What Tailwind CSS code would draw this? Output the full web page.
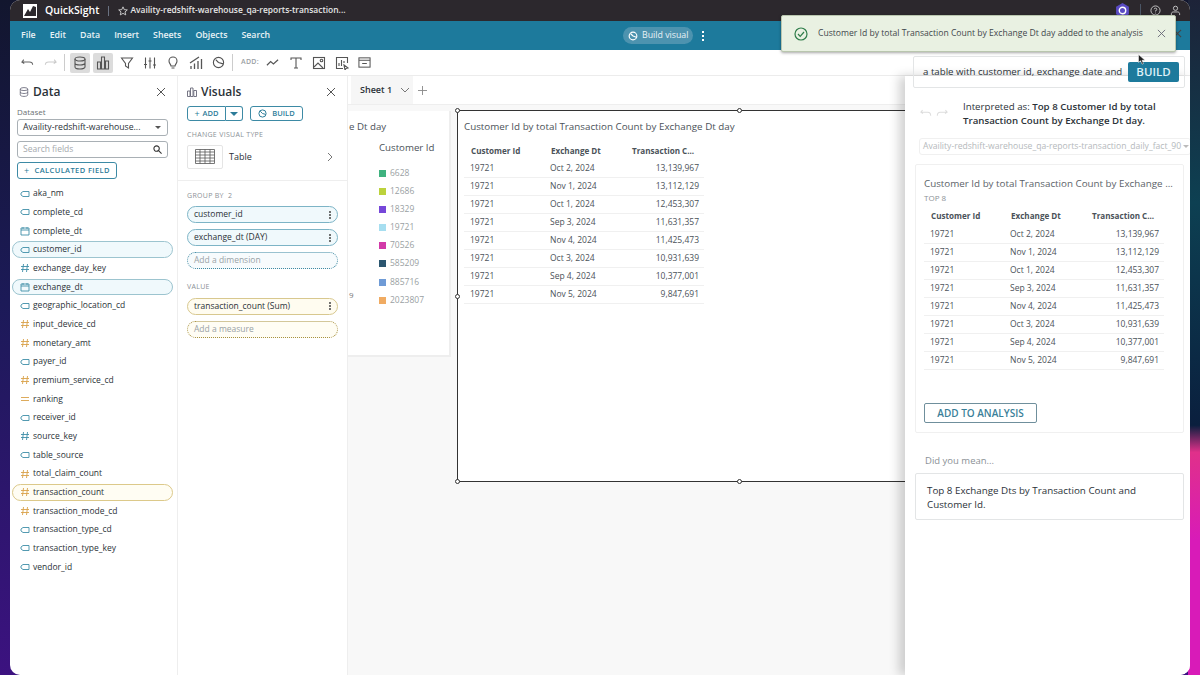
<!DOCTYPE html>
<html lang="en">

<head>
    <meta charset="UTF-8">
    <title>QuickSight</title>
    <script src="https://cdn.jsdelivr.net/npm/@tailwindcss/browser@4"></script>
</head>

<body class="h-[675px] w-[1200px] overflow-hidden font-['Open_Sans','Noto_Sans',sans-serif] text-[#2b3238]">
    <div class="relative h-[675px] w-[1200px] overflow-hidden bg-[linear-gradient(180deg,#12162e_0%,#1c1a58_45%,#3c1280_100%)]">
        <!-- wallpaper on the right -->
        <div class="absolute right-0 top-0 h-full w-[12px] bg-[linear-gradient(180deg,#1d2338_0%,#0d4052_30%,#0a1f3e_63%,#e0308a_67%,#d81bb8_80%,#d81bb8_100%)]"></div>

        <div class="relative ml-[10px] flex h-[675px] w-[1180px] flex-col overflow-hidden rounded-[10px] bg-white">
            <!-- title bar -->
            <header class="flex h-[21px] shrink-0 items-center bg-[#2c282d] pl-[13px] pr-[9px] text-white">
                <svg class="h-[14px] w-[14px]" viewBox="0 0 14 14"><rect width="14" height="14" fill="#fff" /><path d="M1 12 5 5l2 3 3-6 3 1v9z" fill="#2c282d" /></svg>
                <span class="ml-[8px] text-[10.500px] font-semibold">QuickSight</span>
                <span class="ml-[9px] h-[10px] w-px bg-gray-500"></span>
                <svg class="ml-[9px] h-[10px] w-[10px]" viewBox="0 0 12 12" fill="none" stroke="#ddd"><path d="m6 1 1.500 3.400 3.700.3-2.800 2.400.9 3.600L6 8.800l-3.300 1.900.9-3.600L.8 4.700l3.700-.3z" /></svg>
                <span class="ml-[2px] text-[8.450px] font-semibold text-[#e6e6e6]">Availity-redshift-warehouse_qa-reports-transaction...</span>
                <div class="ml-auto flex items-center gap-[9px]">
                    <svg class="mr-[1px] h-[15px] w-[15px]" viewBox="0 0 14 14"><path d="M7 0l6 3.500v7L7 14l-6-3.500v-7z" fill="#5a4bc4" /><circle cx="7" cy="7" r="3" fill="none" stroke="#fff" stroke-width="1.300" /></svg>
                    <span class="h-[14px] w-px bg-gray-600"></span>
                    <svg class="h-[11px] w-[11px]" viewBox="0 0 12 12" fill="none" stroke="#ccc"><circle cx="6" cy="6" r="5" /><path d="M4.600 4.600A1.400 1.400 0 1 1 6 6.200v.8M6 8.400v.8" /></svg>
                    <svg class="h-[11px] w-[11px]" viewBox="0 0 12 12" fill="none" stroke="#ccc"><circle cx="6" cy="3.600" r="2.300" /><path d="M1.500 11V9.600c0-1.200 1-2 2-2h5c1 0 2 .8 2 2V11" /></svg>
                </div>
            </header>

            <!-- menu bar -->
            <nav class="flex h-[29px] shrink-0 items-center bg-[#1d7a9c] pl-[11px] text-[8.800px] font-semibold text-[#e8f2f6]">
                <span>File</span><span class="ml-[14px]">Edit</span><span class="ml-[14px]">Data</span><span class="ml-[14px]">Insert</span><span class="ml-[14px]">Sheets</span><span class="ml-[14px]">Objects</span><span class="ml-[14px]">Search</span>
                <span class="ml-[353px] flex h-[17px] w-[70px] items-center justify-center gap-[4px] rounded-full bg-[#4d93af] font-normal">
                    <svg class="h-[10px] w-[10px]" viewBox="0 0 12 12" fill="none" stroke="#fff" stroke-width="1.400"><circle cx="6" cy="6" r="4.600" /><path d="M6 6l4 1.500M6 6 3 3" /></svg>
                    Build visual
                </span>
                <span class="ml-[9px] flex flex-col gap-[2px]"><i class="h-[2px] w-[2px] bg-white"></i><i class="h-[2px] w-[2px] bg-white"></i><i class="h-[2px] w-[2px] bg-white"></i></span>
            </nav>

            <!-- toolbar -->
            <div class="flex h-[26px] shrink-0 items-center border-b border-[#ececec] pl-[11px] text-[#5f6b73]">
                <svg class="h-[13px] w-[13px]" viewBox="0 0 14 14" fill="none" stroke="#666" stroke-width="1.200"><path d="M3 4 1 6.500 3.500 8M1 6.500h8c2 0 3.500 1 3.500 3" /></svg>
                <svg class="ml-[10px] h-[13px] w-[13px]" viewBox="0 0 14 14" fill="none" stroke="#ccc" stroke-width="1.200"><path d="M11 4l2 2.500L10.500 8M13 6.500H5c-2 0-3.500 1-3.500 3" /></svg>
                <span class="ml-[7px] h-[17px] w-px bg-[#ccc]"></span>
                <span class="ml-[5px] flex h-[20px] w-[20px] items-center justify-center rounded-[2px] bg-[#dcdcdc]"><svg class="h-[14px] w-[14px]" viewBox="0 0 14 14" fill="none" stroke="#555" stroke-width="1.100"><ellipse cx="7" cy="3" rx="5" ry="2" /><path d="M2 3v8c0 1 2 2 5 2s5-1 5-2V3M2 7c0 1 2 2 5 2s5-1 5-2" /></svg></span>
                <span class="ml-[3px] flex h-[20px] w-[20px] items-center justify-center rounded-[2px] bg-[#dcdcdc]"><svg class="h-[14px] w-[14px]" viewBox="0 0 14 14" fill="none" stroke="#555" stroke-width="1.100"><path d="M1.500 6h3v7h-3zM5.500 1h3v12h-3zM9.500 5h3v8h-3z" /></svg></span>
                <svg class="ml-[7px] h-[14px] w-[14px]" viewBox="0 0 14 14" fill="none" stroke="#555" stroke-width="1.100"><path d="M1.500 2h11L8.500 7.500V12l-3-2V7.500z" /></svg>
                <svg class="ml-[9px] h-[14px] w-[14px]" viewBox="0 0 14 14" fill="none" stroke="#555" stroke-width="1.100"><path d="M2.500 1.500v11M7 1.500v11M11.500 1.500v11M1 8.500h3M5.500 5h3M10 9h3" /></svg>
                <svg class="ml-[9px] h-[14px] w-[14px]" viewBox="0 0 14 14" fill="none" stroke="#555" stroke-width="1.100"><path d="M5 10c0-1.500-2-2.500-2-5a4 4 0 0 1 8 0c0 2.500-2 3.500-2 5zM5.500 12h3" /></svg>
                <svg class="ml-[9px] h-[14px] w-[14px]" viewBox="0 0 14 14" fill="none" stroke="#555" stroke-width="1.300"><path d="M2 13v-3M5.500 13V7.500M9 13V5M12.500 13V3M1 7l9-6" /></svg>
                <svg class="ml-[9px] h-[13px] w-[13px]" viewBox="0 0 14 14" fill="none" stroke="#555" stroke-width="1.200"><circle cx="7" cy="7" r="5.500" /><path d="M7 7l5 1.500M7 7 4 4" /></svg>
                <span class="ml-[7px] h-[17px] w-px bg-[#ccc]"></span>
                <span class="ml-[8px] text-[7px] font-semibold tracking-[0.3px] text-[#9aa0a4]">ADD:</span>
                <svg class="ml-[7px] h-[13px] w-[13px]" viewBox="0 0 14 14" fill="none" stroke="#555" stroke-width="1.300"><path d="m1 10 4-4 3 2.500L13 4" /></svg>
                <svg class="ml-[10px] h-[14px] w-[14px]" viewBox="0 0 14 14" fill="none" stroke="#555" stroke-width="1.100"><path d="M2 4V2h10v2M7 2v10M5 12h4" /></svg>
                <svg class="ml-[9px] h-[14px] w-[14px]" viewBox="0 0 14 14" fill="none" stroke="#555" stroke-width="1.100"><rect x="1.500" y="1.500" width="11" height="11" /><circle cx="9.500" cy="4.500" r="1.300" /><path d="m2 11 4-4 5 5" /></svg>
                <svg class="ml-[9px] h-[14px] w-[14px]" viewBox="0 0 14 14" fill="none" stroke="#555" stroke-width="1.100"><path d="M8 12.500H1.500v-11h11V7M4 10V7M6.500 10V4M9 7V5M9 9l4 3-2 .5-1 1.500z" /></svg>
                <svg class="ml-[9px] h-[13px] w-[13px]" viewBox="0 0 14 14" fill="none" stroke="#555" stroke-width="1.100"><rect x="1" y="2" width="12" height="10" /><path d="M1 4.500h12M4.500 8h5" /></svg>
            </div>

            <div class="flex min-h-0 flex-1">
                <!-- data panel -->
                <aside class="w-[168px] shrink-0 border-r border-[#eeeeee] pl-[7px] pr-[9px]">
                    <div class="flex h-[32px] items-center pl-[2px]">
                        <svg class="h-[10px] w-[10px]" viewBox="0 0 12 12" fill="none" stroke="#667" stroke-width="1"><ellipse cx="6" cy="2.500" rx="4.500" ry="1.800" /><path d="M1.500 2.500v7c0 1 2 1.800 4.500 1.800s4.500-.8 4.500-1.800v-7M1.500 6c0 1 2 1.800 4.500 1.800S10.500 7 10.500 6" /></svg>
                        <span class="ml-[4px] text-[12px] font-semibold">Data</span>
                        <svg class="ml-auto mr-[2px] h-[10px] w-[10px]" viewBox="0 0 10 10" fill="none" stroke="#555"><path d="m1 1 8 8M9 1 1 9" /></svg>
                    </div>
                    <p class="-mt-[2px] text-[8px] text-[#6b7075]">Dataset</p>
                    <div class="mt-[1px] flex h-[17px] items-center justify-between rounded-[3px] border border-[#a9b0b5] pl-[5px] pr-[6px] text-[8.700px]">Availity-redshift-warehouse... <i class="h-0 w-0 border-x-[3px] border-t-[3px] border-x-transparent border-t-[#555]"></i></div>
                    <div class="mt-[5px] flex h-[17px] items-center justify-between rounded-[3px] border border-[#a9b0b5] pl-[5px] pr-[5px] text-[8.500px] text-[#a5a9ad]">Search fields
                        <svg class="h-[9px] w-[9px]" viewBox="0 0 10 10" fill="none" stroke="#333" stroke-width="1.200"><circle cx="4" cy="4" r="3" /><path d="m6.500 6.500 3 3" /></svg>
                    </div>
                    <div class="mt-[4px] flex h-[17px] w-[100px] items-center justify-center gap-[5px] rounded-[3px] border border-[#3d8aa5] text-[7.500px] font-semibold tracking-[0.4px] text-[#2c7c99]"><span class="text-[9px] font-normal">+</span>CALCULATED FIELD</div>

                    <ul id="fields" class="mt-[5.500px] text-[8.500px]">
                        <li class="flex h-[18.670px] items-center pl-[3px]"><svg class="mr-[3px] h-[10px] w-[10px]" viewBox="0 0 10 10" fill="none" stroke="#3f8fa8" stroke-width=".9"><path d="M3 2.500h6v5H3L1 6V4z" /></svg>aka_nm</li>
                        <li class="flex h-[18.670px] items-center pl-[3px]"><svg class="mr-[3px] h-[10px] w-[10px]" viewBox="0 0 10 10" fill="none" stroke="#3f8fa8" stroke-width=".9"><path d="M3 2.500h6v5H3L1 6V4z" /></svg>complete_cd</li>
                        <li class="flex h-[18.670px] items-center pl-[3px]"><svg class="mr-[3px] h-[10px] w-[10px]" viewBox="0 0 10 10" fill="none" stroke="#3f8fa8" stroke-width=".9"><path d="M1 2h8v7H1zM1 4h8M3 1v2M7 1v2" /></svg>complete_dt</li>
                        <li class="-mx-[5px] my-[1px] flex h-[16.670px] items-center rounded-full border border-[#9cc4cf] bg-[#f0f9fc] pl-[7px]"><svg class="mr-[3px] h-[10px] w-[10px]" viewBox="0 0 10 10" fill="none" stroke="#3f8fa8" stroke-width=".9"><path d="M3 2.500h6v5H3L1 6V4z" /></svg>customer_id</li>
                        <li class="flex h-[18.670px] items-center pl-[3px]"><svg class="mr-[3px] h-[10px] w-[10px]" viewBox="0 0 10 10" fill="none" stroke="#3f8fa8" stroke-width=".9"><path d="M3.500 1 2.500 9M7.500 1l-1 8M1 3.500h8M1 6.500h8" /></svg>exchange_day_key</li>
                        <li class="-mx-[5px] my-[1px] flex h-[16.670px] items-center rounded-full border border-[#9cc4cf] bg-[#f0f9fc] pl-[7px]"><svg class="mr-[3px] h-[10px] w-[10px]" viewBox="0 0 10 10" fill="none" stroke="#3f8fa8" stroke-width=".9"><path d="M1 2h8v7H1zM1 4h8M3 1v2M7 1v2" /></svg>exchange_dt</li>
                        <li class="flex h-[18.670px] items-center pl-[3px]"><svg class="mr-[3px] h-[10px] w-[10px]" viewBox="0 0 10 10" fill="none" stroke="#3f8fa8" stroke-width=".9"><path d="M3 2.500h6v5H3L1 6V4z" /></svg>geographic_location_cd</li>
                        <li class="flex h-[18.670px] items-center pl-[3px]"><svg class="mr-[3px] h-[10px] w-[10px]" viewBox="0 0 10 10" fill="none" stroke="#d9a24a" stroke-width=".9"><path d="M3.500 1 2.500 9M7.500 1l-1 8M1 3.500h8M1 6.500h8" /></svg>input_device_cd</li>
                        <li class="flex h-[18.670px] items-center pl-[3px]"><svg class="mr-[3px] h-[10px] w-[10px]" viewBox="0 0 10 10" fill="none" stroke="#d9a24a" stroke-width=".9"><path d="M3.500 1 2.500 9M7.500 1l-1 8M1 3.500h8M1 6.500h8" /></svg>monetary_amt</li>
                        <li class="flex h-[18.670px] items-center pl-[3px]"><svg class="mr-[3px] h-[10px] w-[10px]" viewBox="0 0 10 10" fill="none" stroke="#3f8fa8" stroke-width=".9"><path d="M3 2.500h6v5H3L1 6V4z" /></svg>payer_id</li>
                        <li class="flex h-[18.670px] items-center pl-[3px]"><svg class="mr-[3px] h-[10px] w-[10px]" viewBox="0 0 10 10" fill="none" stroke="#d9a24a" stroke-width=".9"><path d="M3.500 1 2.500 9M7.500 1l-1 8M1 3.500h8M1 6.500h8" /></svg>premium_service_cd</li>
                        <li class="flex h-[18.670px] items-center pl-[3px]"><svg class="mr-[3px] h-[10px] w-[10px]" viewBox="0 0 10 10" fill="none" stroke="#d9a24a" stroke-width=".9"><path d="M1 3.500h8M1 6.500h8" /></svg>ranking</li>
                        <li class="flex h-[18.670px] items-center pl-[3px]"><svg class="mr-[3px] h-[10px] w-[10px]" viewBox="0 0 10 10" fill="none" stroke="#3f8fa8" stroke-width=".9"><path d="M3 2.500h6v5H3L1 6V4z" /></svg>receiver_id</li>
                        <li class="flex h-[18.670px] items-center pl-[3px]"><svg class="mr-[3px] h-[10px] w-[10px]" viewBox="0 0 10 10" fill="none" stroke="#3f8fa8" stroke-width=".9"><path d="M3.500 1 2.500 9M7.500 1l-1 8M1 3.500h8M1 6.500h8" /></svg>source_key</li>
                        <li class="flex h-[18.670px] items-center pl-[3px]"><svg class="mr-[3px] h-[10px] w-[10px]" viewBox="0 0 10 10" fill="none" stroke="#3f8fa8" stroke-width=".9"><path d="M3 2.500h6v5H3L1 6V4z" /></svg>table_source</li>
                        <li class="flex h-[18.670px] items-center pl-[3px]"><svg class="mr-[3px] h-[10px] w-[10px]" viewBox="0 0 10 10" fill="none" stroke="#d9a24a" stroke-width=".9"><path d="M3.500 1 2.500 9M7.500 1l-1 8M1 3.500h8M1 6.500h8" /></svg>total_claim_count</li>
                        <li class="-mx-[5px] my-[1px] flex h-[16.670px] items-center rounded-full border border-[#dcc98a] bg-[#fffdf3] pl-[7px]"><svg class="mr-[3px] h-[10px] w-[10px]" viewBox="0 0 10 10" fill="none" stroke="#d9a24a" stroke-width=".9"><path d="M3.500 1 2.500 9M7.500 1l-1 8M1 3.500h8M1 6.500h8" /></svg>transaction_count</li>
                        <li class="flex h-[18.670px] items-center pl-[3px]"><svg class="mr-[3px] h-[10px] w-[10px]" viewBox="0 0 10 10" fill="none" stroke="#d9a24a" stroke-width=".9"><path d="M3.500 1 2.500 9M7.500 1l-1 8M1 3.500h8M1 6.500h8" /></svg>transaction_mode_cd</li>
                        <li class="flex h-[18.670px] items-center pl-[3px]"><svg class="mr-[3px] h-[10px] w-[10px]" viewBox="0 0 10 10" fill="none" stroke="#3f8fa8" stroke-width=".9"><path d="M3 2.500h6v5H3L1 6V4z" /></svg>transaction_type_cd</li>
                        <li class="flex h-[18.670px] items-center pl-[3px]"><svg class="mr-[3px] h-[10px] w-[10px]" viewBox="0 0 10 10" fill="none" stroke="#3f8fa8" stroke-width=".9"><path d="M3 2.500h6v5H3L1 6V4z" /></svg>transaction_type_key</li>
                        <li class="flex h-[18.670px] items-center pl-[3px]"><svg class="mr-[3px] h-[10px] w-[10px]" viewBox="0 0 10 10" fill="none" stroke="#3f8fa8" stroke-width=".9"><path d="M3 2.500h6v5H3L1 6V4z" /></svg>vendor_id</li>
                    </ul>
                </aside>

                <!-- visuals panel -->
                <aside class="w-[170px] shrink-0 border-r border-[#eeeeee]">
                    <div class="border-b border-[#eeeeee] px-[9px] pb-[11px]">
                        <div class="flex h-[32px] items-center">
                            <svg class="h-[10px] w-[10px]" viewBox="0 0 10 10" fill="none" stroke="#667" stroke-width=".9"><path d="M.5 4h2.500v5.500H.5zM3.500 1H6v8.500H3.500zM6.800 3.500h2.700v6H6.800z" /></svg>
                            <span class="ml-[4px] text-[12px] font-semibold">Visuals</span>
                            <svg class="ml-auto mr-[2px] h-[10px] w-[10px]" viewBox="0 0 10 10" fill="none" stroke="#555"><path d="m1 1 8 8M9 1 1 9" /></svg>
                        </div>
                        <div class="-mt-[2px] flex items-center">
                            <div class="flex h-[15px] w-[39px] items-center justify-center gap-[3px] rounded-l-[3px] border border-[#3d8aa5] text-[7.500px] font-semibold text-[#2c7c99]"><span class="text-[9px] font-normal">+</span>ADD</div>
                            <div class="flex h-[15px] w-[17px] items-center justify-center rounded-r-[3px] border border-l-0 border-[#3d8aa5]"><i class="h-0 w-0 border-x-[4px] border-t-[4px] border-x-transparent border-t-[#2c7c99]"></i></div>
                            <div class="ml-[7px] flex h-[15px] w-[53px] items-center justify-center gap-[5px] rounded-[3px] border border-[#3d8aa5] text-[7.500px] font-semibold text-[#2c7c99]"><svg class="h-[9px] w-[9px]" viewBox="0 0 10 10" fill="none" stroke="#2c7c99" stroke-width="1.100"><circle cx="5" cy="5" r="4" /><path d="m5 5 3.500 1M5 5 2.500 2.500" /></svg>BUILD</div>
                        </div>
                        <p class="mt-[9px] text-[7px] tracking-[0.3px] text-[#8b9196]">CHANGE VISUAL TYPE</p>
                        <div class="mt-[4px] flex items-center">
                            <div class="flex h-[24px] w-[36px] items-center justify-center rounded-[2px] border border-[#e5e5e5]"><svg class="h-[15px] w-[20px]" viewBox="0 0 20 15" fill="none" stroke="#555" stroke-width=".8"><path d="M.5.500h19v14H.5zM.5 3h19M.5 6h19M.5 9h19M.5 12h19M5 .5v14M10 .5v14M15 .5v14" /></svg></div>
                            <span class="ml-[6px] text-[9px]">Table</span>
                            <svg class="ml-auto mr-[5px] h-[10px] w-[6px]" viewBox="0 0 6 10" fill="none" stroke="#777"><path d="m1 1 4 4-4 4" /></svg>
                        </div>
                    </div>
                    <div class="px-[9px]">
                        <p class="mt-[10px] text-[7px] tracking-[0.3px] text-[#8b9196]">GROUP BY &nbsp;2</p>
                        <div class="mt-[5px] flex h-[17px] items-center justify-between rounded-full border border-[#7db4c6] bg-[#f0f9fc] pl-[6px] pr-[6px] text-[8.500px]">customer_id<span class="flex flex-col gap-[1px]"><i class="h-[2px] w-[2px] rounded-full bg-[#444]"></i><i class="h-[2px] w-[2px] rounded-full bg-[#444]"></i><i class="h-[2px] w-[2px] rounded-full bg-[#444]"></i></span></div>
                        <div class="mt-[6px] flex h-[17px] items-center justify-between rounded-full border border-[#7db4c6] bg-[#f0f9fc] pl-[6px] pr-[6px] text-[8.500px]">exchange_dt (DAY)<span class="flex flex-col gap-[1px]"><i class="h-[2px] w-[2px] rounded-full bg-[#444]"></i><i class="h-[2px] w-[2px] rounded-full bg-[#444]"></i><i class="h-[2px] w-[2px] rounded-full bg-[#444]"></i></span></div>
                        <div class="mt-[6px] flex h-[17px] items-center rounded-full border-[1.500px] border-dotted border-[#3f8aa3] bg-[#f7fbfd] pl-[6px] text-[8.500px] text-[#9aa2a6]">Add a dimension</div>
                        <p class="mt-[13px] text-[7px] tracking-[0.3px] text-[#8b9196]">VALUE</p>
                        <div class="mt-[5px] flex h-[17px] items-center justify-between rounded-full border border-[#d8c88f] bg-[#fffcf0] pl-[6px] pr-[6px] text-[8.500px]">transaction_count (Sum)<span class="flex flex-col gap-[1px]"><i class="h-[2px] w-[2px] rounded-full bg-[#444]"></i><i class="h-[2px] w-[2px] rounded-full bg-[#444]"></i><i class="h-[2px] w-[2px] rounded-full bg-[#444]"></i></span></div>
                        <div class="mt-[6px] flex h-[17px] items-center rounded-full border-[1.500px] border-dotted border-[#a89240] bg-[#fffdf4] pl-[6px] text-[8.500px] text-[#9aa2a6]">Add a measure</div>
                    </div>
                </aside>

                <!-- canvas -->
                <main class="relative min-w-0 flex-1 bg-[#f8f8f8]">
                    <div class="flex h-[29px] border-b border-[#eeeeee] bg-white">
                        <div class="ml-[3px] flex w-[62px] items-center justify-between bg-[#f6f6f6] pl-[9px] pr-[3px] text-[9px] font-semibold">Sheet 1
                            <svg class="h-[6px] w-[10px]" viewBox="0 0 10 6" fill="none" stroke="#777"><path d="m1 1 4 4 4-4" /></svg>
                        </div>
                        <svg class="ml-[5px] mt-[10px] h-[9px] w-[9px]" viewBox="0 0 10 10" fill="none" stroke="#888"><path d="M5 0v10M0 5h10" /></svg>
                    </div>
                    <div class="flex items-start pt-[6px]">
                        <!-- chart behind, cut off on the left -->
                        <div class="relative h-[246px] w-[103px] shrink-0 border-b-2 border-r-2 border-[#eeeeee] bg-white">
                            <p class="pl-[1px] pt-[9px] text-[9.700px] text-[#4b5259]">e Dt day</p>
                            <p class="ml-[31px] mt-[6px] text-[9.700px] text-[#4b5259]">Customer Id</p>
                            <ul class="ml-[31px] mt-[9px] text-[8.500px] text-[#9a9fa3]">
                                <li class="flex h-[18.150px] items-center gap-[4px]"><i class="h-[7px] w-[7px] bg-[#3fb27f]"></i>6628</li>
                                <li class="flex h-[18.150px] items-center gap-[4px]"><i class="h-[7px] w-[7px] bg-[#bcd23c]"></i>12686</li>
                                <li class="flex h-[18.150px] items-center gap-[4px]"><i class="h-[7px] w-[7px] bg-[#7647d9]"></i>18329</li>
                                <li class="flex h-[18.150px] items-center gap-[4px]"><i class="h-[7px] w-[7px] bg-[#a6def0]"></i>19721</li>
                                <li class="flex h-[18.150px] items-center gap-[4px]"><i class="h-[7px] w-[7px] bg-[#d23aa8]"></i>70526</li>
                                <li class="flex h-[18.150px] items-center gap-[4px]"><i class="h-[7px] w-[7px] bg-[#2b5670]"></i>585209</li>
                                <li class="flex h-[18.150px] items-center gap-[4px]"><i class="h-[7px] w-[7px] bg-[#6f9bd6]"></i>885716</li>
                                <li class="flex h-[18.150px] items-center gap-[4px]"><i class="h-[7px] w-[7px] bg-[#f0ab62]"></i>2023807</li>
                            </ul>
                            <span class="absolute left-[1px] top-[178px] text-[8px] text-[#777]">9</span>
                        </div>
                        <!-- selected visual -->
                        <div class="relative -mt-[1px] ml-[6px] h-[372px] flex-1 border-[1.500px] border-r-0 border-[#333] bg-white pl-[6px]">
                            <p class="whitespace-nowrap pt-[9px] text-[9.800px] text-[#4b5259]">Customer Id by total Transaction Count by Exchange Dt day</p>
                            <table class="mt-[7px] w-[240px] text-[8.500px] text-[#4b5259]">
                                <thead>
                                    <tr class="h-[18px] text-[8.100px] font-semibold"><th class="w-[80px] pl-[7px] text-left">Customer Id</th><th class="w-[81px] pl-[7px] text-left">Exchange Dt</th><th class="whitespace-nowrap pl-[7px] text-left">Transaction C...</th></tr>
                                </thead>
                                <tbody>
                                    <tr class="h-[18px] border-b border-[#f0f0f0]"><td class="pl-[6px]">19721</td><td class="pl-[6px]">Oct 2, 2024</td><td class="pr-[5px] text-right">13,139,967</td></tr>
                                    <tr class="h-[18px] border-b border-[#f0f0f0]"><td class="pl-[6px]">19721</td><td class="pl-[6px]">Nov 1, 2024</td><td class="pr-[5px] text-right">13,112,129</td></tr>
                                    <tr class="h-[18px] border-b border-[#f0f0f0]"><td class="pl-[6px]">19721</td><td class="pl-[6px]">Oct 1, 2024</td><td class="pr-[5px] text-right">12,453,307</td></tr>
                                    <tr class="h-[18px] border-b border-[#f0f0f0]"><td class="pl-[6px]">19721</td><td class="pl-[6px]">Sep 3, 2024</td><td class="pr-[5px] text-right">11,631,357</td></tr>
                                    <tr class="h-[18px] border-b border-[#f0f0f0]"><td class="pl-[6px]">19721</td><td class="pl-[6px]">Nov 4, 2024</td><td class="pr-[5px] text-right">11,425,473</td></tr>
                                    <tr class="h-[18px] border-b border-[#f0f0f0]"><td class="pl-[6px]">19721</td><td class="pl-[6px]">Oct 3, 2024</td><td class="pr-[5px] text-right">10,931,639</td></tr>
                                    <tr class="h-[18px] border-b border-[#f0f0f0]"><td class="pl-[6px]">19721</td><td class="pl-[6px]">Sep 4, 2024</td><td class="pr-[5px] text-right">10,377,001</td></tr>
                                    <tr class="h-[18px] border-b border-[#f0f0f0]"><td class="pl-[6px]">19721</td><td class="pl-[6px]">Nov 5, 2024</td><td class="pr-[5px] text-right">9,847,691</td></tr>
                                </tbody>
                            </table>
                            <!-- resize handles -->
                            <i class="absolute -left-[3px] -top-[3px] h-[5px] w-[5px] rounded-full border border-[#333] bg-white"></i>
                            <i class="absolute left-[279px] -top-[3px] h-[5px] w-[5px] rounded-full border border-[#333] bg-white"></i>
                            <i class="absolute -left-[3px] top-[183px] h-[5px] w-[5px] rounded-full border border-[#333] bg-white"></i>
                            <i class="absolute -bottom-[3px] -left-[3px] h-[5px] w-[5px] rounded-full border border-[#333] bg-white"></i>
                            <i class="absolute -bottom-[3px] left-[279px] h-[5px] w-[5px] rounded-full border border-[#333] bg-white"></i>
                        </div>
                    </div>
                </main>

                <!-- Q panel -->
                <section class="relative w-[285px] shrink-0 bg-white pl-[8px] pr-[5px] shadow-[-6px_0_10px_rgba(0,0,0,0.18)]">
                    <div class="mt-[-20px] flex h-[32px] w-[272px] items-center justify-between rounded-[2px] border border-[#e3e5e6] pl-[9px] pr-[5px] text-[9.700px]"><span class="whitespace-nowrap">a table with customer id, exchange date and</span>
                        <span class="flex h-[20px] w-[51px] shrink-0 items-center justify-center rounded-[2px] bg-[#1d7a9c] text-[11.500px] font-semibold text-[#dff0f6]">BUILD</span>
                    </div>
                    <div class="mt-[12px] flex items-start pl-[7px]">
                        <div class="mt-[9px] flex w-[43px] gap-[4px]">
                            <svg class="h-[9px] w-[12px]" viewBox="0 0 14 10" fill="none" stroke="#ddd" stroke-width="1.200"><path d="M3 1 1 3.500 3.500 5M1 3.500h8c2 0 3.500 1.500 3.500 4" /></svg>
                            <svg class="h-[9px] w-[12px]" viewBox="0 0 14 10" fill="none" stroke="#ddd" stroke-width="1.200"><path d="M11 1l2 2.500L10.500 5M13 3.500H5c-2 0-3.500 1.500-3.500 4" /></svg>
                        </div>
                        <p class="whitespace-nowrap text-[9.700px] leading-[14px]">Interpreted as: <b class="font-semibold">Top 8 Customer Id by total<br>Transaction Count by Exchange Dt day.</b></p>
                    </div>
                    <div class="ml-[6px] mt-[10px] flex h-[17px] w-[272px] items-center justify-between rounded-[3px] border border-[#f0f0f0] pl-[3px] pr-[1px] text-[8.600px] text-[#b5b9bc]"><span class="whitespace-nowrap">Availity-redshift-warehouse_qa-reports-transaction_daily_fact_90</span><i class="h-0 w-0 shrink-0 border-x-[3px] border-t-[3px] border-x-transparent border-t-[#bbb]"></i></div>
                    <div class="ml-[2px] mt-[9px] h-[269px] w-[269px] rounded-[2px] border border-[#f0f0f0] pl-[8px]">
                        <p class="mt-[12px] whitespace-nowrap text-[9.800px] text-[#5b6268]">Customer Id by total Transaction Count by Exchange ...</p>
                        <p class="text-[8px] text-[#8b9196]">TOP 8</p>
                        <table class="mt-[3px] w-[240px] text-[8.500px] text-[#4b5259]">
                            <thead>
                                <tr class="h-[19px] text-[8.100px] font-semibold"><th class="w-[80px] pl-[7px] text-left">Customer Id</th><th class="w-[81px] pl-[7px] text-left">Exchange Dt</th><th class="whitespace-nowrap pl-[7px] text-left">Transaction C...</th></tr>
                            </thead>
                            <tbody>
                                <tr class="h-[18px] border-b border-[#f0f0f0]"><td class="pl-[6px]">19721</td><td class="pl-[6px]">Oct 2, 2024</td><td class="pr-[5px] text-right">13,139,967</td></tr>
                                <tr class="h-[18px] border-b border-[#f0f0f0]"><td class="pl-[6px]">19721</td><td class="pl-[6px]">Nov 1, 2024</td><td class="pr-[5px] text-right">13,112,129</td></tr>
                                <tr class="h-[18px] border-b border-[#f0f0f0]"><td class="pl-[6px]">19721</td><td class="pl-[6px]">Oct 1, 2024</td><td class="pr-[5px] text-right">12,453,307</td></tr>
                                <tr class="h-[18px] border-b border-[#f0f0f0]"><td class="pl-[6px]">19721</td><td class="pl-[6px]">Sep 3, 2024</td><td class="pr-[5px] text-right">11,631,357</td></tr>
                                <tr class="h-[18px] border-b border-[#f0f0f0]"><td class="pl-[6px]">19721</td><td class="pl-[6px]">Nov 4, 2024</td><td class="pr-[5px] text-right">11,425,473</td></tr>
                                <tr class="h-[18px] border-b border-[#f0f0f0]"><td class="pl-[6px]">19721</td><td class="pl-[6px]">Oct 3, 2024</td><td class="pr-[5px] text-right">10,931,639</td></tr>
                                <tr class="h-[18px] border-b border-[#f0f0f0]"><td class="pl-[6px]">19721</td><td class="pl-[6px]">Sep 4, 2024</td><td class="pr-[5px] text-right">10,377,001</td></tr>
                                <tr class="h-[18px] border-b border-[#f0f0f0]"><td class="pl-[6px]">19721</td><td class="pl-[6px]">Nov 5, 2024</td><td class="pr-[5px] text-right">9,847,691</td></tr>
                            </tbody>
                        </table>
                        <div class="mt-[33px] flex h-[20px] w-[113px] items-center justify-center rounded-[2px] border border-[#6f8f9c] text-[10px] font-semibold text-[#3a7f99]">ADD TO ANALYSIS</div>
                    </div>
                    <p class="ml-[12px] mt-[21px] text-[9.500px] text-[#8b9196]">Did you mean...</p>
                    <div class="ml-[2px] mt-[5px] h-[47px] w-[269px] rounded-[2px] border border-[#e3e5e6] pl-[11px] pt-[10px] text-[9.800px] leading-[14px]">Top 8 Exchange Dts by Transaction Count and<br>Customer Id.</div>
                </section>
            </div>

            <!-- close button of the Q panel, half hidden by the toast -->
            <svg class="absolute left-[1163px] top-[29px] h-[9px] w-[9px]" viewBox="0 0 10 10" fill="none" stroke="#444" stroke-width="1.200"><path d="m1 1 8 8M9 1 1 9" /></svg>
        </div>

        <!-- toast -->
        <div class="absolute left-[781px] top-[15px] flex h-[37px] w-[395px] items-center rounded-[2px] border border-[#b9c6ae] bg-[#e9f1e2] pl-[12px] pr-[9px] text-[8.600px] text-[#3f474c] shadow-[0_1px_3px_rgba(0,0,0,0.35)]">
            <svg class="h-[14px] w-[14px]" viewBox="0 0 14 14" fill="none" stroke="#2f7d4a" stroke-width="1.200"><circle cx="7" cy="7" r="6" /><path d="m4 7 2.200 2.400L10 5" /></svg>
            <span class="ml-[10px] whitespace-nowrap">Customer Id by total Transaction Count by Exchange Dt day added to the analysis</span>
            <svg class="ml-auto h-[9px] w-[9px]" viewBox="0 0 10 10" fill="none" stroke="#667"><path d="m1 1 8 8M9 1 1 9" /></svg>
        </div>

        <!-- mouse cursor -->
        <svg class="absolute left-[1138px] top-[54px] h-[11px] w-[8px]" viewBox="0 0 8 11"><path d="M.5.500v8l2-1.800 1.500 3.500 1.500-.6L4 6.300h3z" fill="#222" stroke="#fff" stroke-width=".5" /></svg>
    </div>
</body>

</html>
